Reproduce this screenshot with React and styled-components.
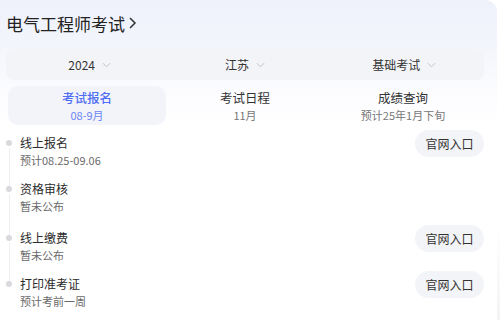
import React from "react";
import styled, { createGlobalStyle } from "styled-components";

const Global = createGlobalStyle`
  html, body { margin: 0; padding: 0; background: #fff; }
  body { font-family: "Noto Sans CJK SC", "Noto Sans", sans-serif; }
  * { box-sizing: border-box; }
`;

const Page = styled.div`
  width: 500px;
  height: 320px;
  display: flex;
  background: linear-gradient(to bottom, #fff 0%, #fff 70%, #f3f3f5 100%);
`;

const Card = styled.div`
  width: 497px;
  height: 320px;
  border-top-right-radius: 12px;
  background: linear-gradient(to bottom, #eef1fb 0px, #f4f6fc 50px, #fdfdff 100px, #fff 130px);
  padding: 0 13px 0 6px;
  display: flex;
  flex-direction: column;
`;

const Title = styled.div`
  height: 45px;
  display: flex;
  align-items: center;
  padding-top: 1px;
  font-size: 17px;
  color: #222;
  gap: 3px;
`;

const FilterBar = styled.div`
  margin-top: 4px;
  height: 31px;
  width: 478px;
  border-radius: 8px;
  background: #f3f4f8;
  display: grid;
  grid-template-columns: 1fr 1fr 1fr;
`;

const Filter = styled.div`
  display: flex;
  align-items: center;
  justify-content: center;
  gap: 7px;
  font-size: 12px;
  color: #333;
  padding-left: ${(p) => p.$shift || 0}px;
`;

const Tabs = styled.div`
  margin-top: 6px;
  margin-left: 2px;
  width: 474px;
  height: 39px;
  display: grid;
  grid-template-columns: 1fr 1fr 1fr;
`;

const Tab = styled.div`
  border-radius: 10px;
  background: ${(p) => (p.$active ? "#f3f4fa" : "transparent")};
  display: flex;
  flex-direction: column;
  align-items: center;
  justify-content: center;
  gap: 0px;
`;

const TabTitle = styled.div`
  font-size: 12.5px;
  line-height: 18px;
  font-weight: ${(p) => (p.$active ? 500 : 400)};
  color: ${(p) => (p.$active ? "#4f6ef2" : "#333")};
`;

const TabSub = styled.div`
  font-size: 11px;
  line-height: 16px;
  color: ${(p) => (p.$active ? "#6b86f4" : "#777")};
`;

const Timeline = styled.div`
  margin-top: 11px;
  display: flex;
  flex-direction: column;
`;

const Item = styled.div`
  position: relative;
  display: flex;
  align-items: flex-start;
  justify-content: space-between;
  height: ${(p) => p.$h}px;
  padding-left: 14px;
  &::before {
    content: "";
    position: absolute;
    left: 0px;
    top: 4px;
    width: 6px;
    height: 6px;
    border-radius: 50%;
    background: #d9d9de;
  }
  &::after {
    content: "";
    position: absolute;
    left: 2.5px;
    top: 12px;
    bottom: -4px;
    width: 1px;
    background: ${(p) => (p.$last ? "transparent" : "#eeeef1")};
  }
`;

const ItemText = styled.div`
  display: flex;
  flex-direction: column;
  gap: 3px;
`;

const ItemTitle = styled.div`
  font-size: 12px;
  line-height: 14px;
  color: #2b2b2b;
`;

const ItemSub = styled.div`
  font-size: 11px;
  line-height: 14px;
  color: #6a6a6a;
`;

const LinkBtn = styled.div`
  margin-top: -6px;
  width: 69px;
  height: 27px;
  border-radius: 14px;
  background: #f3f4f7;
  display: flex;
  align-items: center;
  justify-content: center;
  font-size: 12px;
  color: #333;
`;

const Chevron = ({ size = 9, color = "#bbb" }) => (
  <svg width={size} height={6} viewBox="0 0 10 6">
    <path d="M1 1 L5 5 L9 1" fill="none" stroke={color} strokeWidth="1" />
  </svg>
);

const RightArrow = () => (
  <svg width="9" height="14" viewBox="0 0 9 14">
    <path d="M2 2 L7 7 L2 12" fill="none" stroke="#333" strokeWidth="1.5" />
  </svg>
);

const items = [
  { t: "线上报名", s: "预计08.25-09.06", btn: true, h: 46 },
  { t: "资格审核", s: "暂未公布", btn: false, h: 49 },
  { t: "线上缴费", s: "暂未公布", btn: true, h: 46 },
  { t: "打印准考证", s: "预计考前一周", btn: true, h: 40 },
];

export default function App() {
  return (
    <>
      <Global />
      <Page>
        <Card>
          <Title>
            电气工程师考试
            <RightArrow />
          </Title>
          <FilterBar>
            <Filter $shift={8}>2024 <Chevron /></Filter>
            <Filter $shift={0}>江苏 <Chevron /></Filter>
            <Filter $shift={-8}>基础考试 <Chevron /></Filter>
          </FilterBar>
          <Tabs>
            <Tab $active>
              <TabTitle $active>考试报名</TabTitle>
              <TabSub $active>08-9月</TabSub>
            </Tab>
            <Tab>
              <TabTitle>考试日程</TabTitle>
              <TabSub>11月</TabSub>
            </Tab>
            <Tab>
              <TabTitle>成绩查询</TabTitle>
              <TabSub>预计25年1月下旬</TabSub>
            </Tab>
          </Tabs>
          <Timeline>
            {items.map((it, i) => (
              <Item key={i} $h={it.h} $last={i === items.length - 1}>
                <ItemText>
                  <ItemTitle>{it.t}</ItemTitle>
                  <ItemSub>{it.s}</ItemSub>
                </ItemText>
                {it.btn && <LinkBtn>官网入口</LinkBtn>}
              </Item>
            ))}
          </Timeline>
        </Card>
      </Page>
    </>
  );
}
